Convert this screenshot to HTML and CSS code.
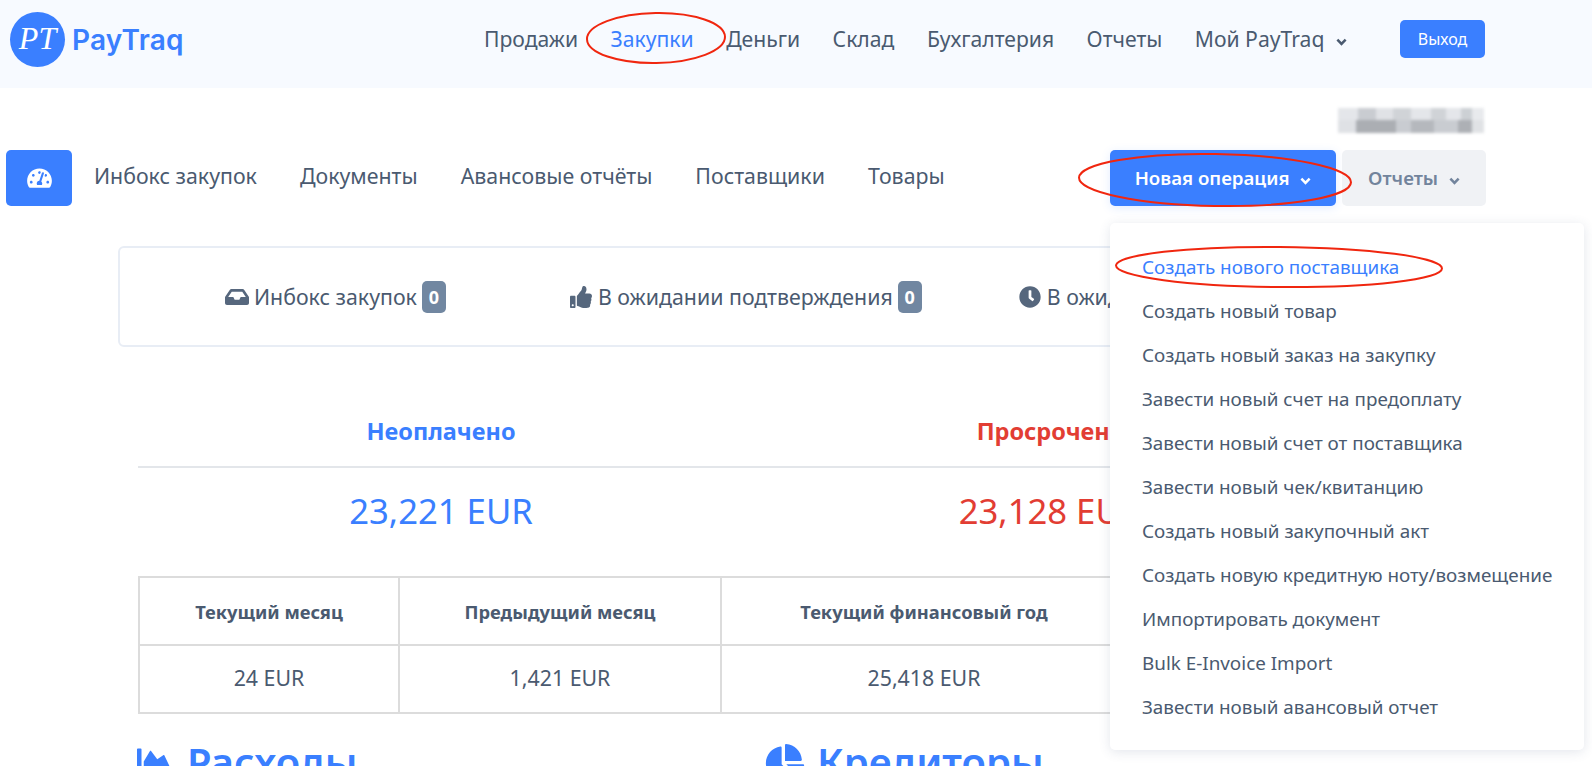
FILE: index.html
```html
<!DOCTYPE html>
<html lang="ru">
<head>
    <meta charset="UTF-8">
    <meta name="viewport" content="width=device-width, initial-scale=1.0">
    <title>PayTraq</title>
    <link rel="stylesheet" href="styles.css">
</head>
<body>
    <header class="topbar">
        <a class="logo">
            <span class="logo-mark">PT</span>
            <span class="logo-name">PayTraq</span>
        </a>
        <nav class="topnav">
            <a>Продажи</a>
            <a class="active">Закупки</a>
            <a>Деньги</a>
            <a>Склад</a>
            <a>Бухгалтерия</a>
            <a>Отчеты</a>
            <a>Мой PayTraq <svg class="chevron" viewBox="0 0 12 8"><path d="M1.5 1.5 6 6l4.500-4.500"/></svg></a>
        </nav>
        <a class="btn-logout">Выход</a>
    </header>

    <div class="account-blur">
        <div class="blur-row-one"></div>
        <div class="blur-row-two"></div>
    </div>

    <div class="subnav">
        <a class="home-btn">
            <svg class="icon-home" viewBox="0 0 576 512"><path d="M288 32C128.94 32 0 160.94 0 320c0 52.8 14.25 102.26 39.06 144.8 5.61 9.62 16.3 15.2 27.44 15.2h443c11.14 0 21.83-5.58 27.44-15.2C561.75 422.26 576 372.8 576 320c0-159.06-128.94-288-288-288zm0 64c14.71 0 26.58 10.13 30.32 23.65-1.11 2.26-2.64 4.23-3.45 6.67l-9.22 27.67c-5.13 3.49-10.97 6.01-17.64 6.01-17.67 0-32-14.33-32-32S270.33 96 288 96zM96 384c-17.67 0-32-14.33-32-32s14.33-32 32-32 32 14.33 32 32-14.33 32-32 32zm48-160c-17.67 0-32-14.33-32-32s14.33-32 32-32 32 14.33 32 32-14.33 32-32 32zm246.77-72.41l-61.33 184C343.13 347.33 352 364.54 352 384c0 11.72-3.38 22.55-8.88 32H232.88c-5.5-9.45-8.88-20.28-8.88-32 0-33.94 26.5-61.43 59.9-63.59l61.34-184.01c4.17-12.56 17.73-19.45 30.36-15.17 12.57 4.19 19.35 17.79 15.17 30.36zm14.66 57.2l15.52-46.55c3.47-1.29 7.13-2.23 11.05-2.23 17.67 0 32 14.33 32 32s-14.33 32-32 32c-11.38-.01-20.89-6.28-26.57-15.22zM480 384c-17.67 0-32-14.33-32-32s14.33-32 32-32 32 14.33 32 32-14.33 32-32 32z"/></svg>
        </a>
        <a class="subnav-link">Инбокс закупок</a>
        <a class="subnav-link">Документы</a>
        <a class="subnav-link">Авансовые отчёты</a>
        <a class="subnav-link">Поставщики</a>
        <a class="subnav-link">Товары</a>
        <div class="subnav-actions">
            <a class="btn-primary">Новая операция <svg class="chevron" viewBox="0 0 12 8"><path d="M1.5 1.5 6 6l4.500-4.500"/></svg></a>
            <a class="btn-light">Отчеты <svg class="chevron" viewBox="0 0 12 8"><path d="M1.5 1.5 6 6l4.500-4.500"/></svg></a>
        </div>
    </div>

    <main class="content">
        <div class="status-box">
            <div class="status-item">
                <svg class="icon-status" viewBox="0 0 576 512"><path d="M567.938 243.908L462.25 85.374A48.003 48.003 0 0 0 422.311 64H153.689a48 48 0 0 0-39.938 21.374L8.062 243.908A47.994 47.994 0 0 0 0 270.533V400c0 26.51 21.49 48 48 48h480c26.51 0 48-21.49 48-48V270.533a47.994 47.994 0 0 0-8.062-26.625zM162.252 128h251.497l85.333 128H376l-32 64H232l-32-64H76.918l85.334-128z"/></svg>
                Инбокс закупок <span class="badge">0</span>
            </div>
            <div class="status-item">
                <svg class="icon-status" viewBox="0 0 512 512"><path d="M104 224H24c-13.255 0-24 10.745-24 24v240c0 13.255 10.745 24 24 24h80c13.255 0 24-10.745 24-24V248c0-13.255-10.745-24-24-24zM64 472c-13.255 0-24-10.745-24-24s10.745-24 24-24 24 10.745 24 24-10.745 24-24 24zM384 81.452c0 42.416-25.97 66.208-33.277 94.548h101.723c33.397 0 59.397 27.746 59.553 58.098.084 17.938-7.546 37.249-19.439 49.197l-.11.11c9.836 23.337 8.237 56.037-9.308 79.469 8.681 25.895-.069 57.704-16.382 74.757 4.298 17.598 2.244 32.575-6.148 44.632C440.202 511.587 389.616 512 346.839 512l-2.845-.001c-48.287-.017-87.806-17.598-119.56-31.725-15.957-7.099-36.821-15.887-52.651-16.178-6.54-.12-11.783-5.457-11.783-11.998v-213.77c0-3.2 1.282-6.271 3.558-8.521 39.614-39.144 56.648-80.587 89.117-113.111 14.804-14.832 20.188-37.236 25.393-58.902C282.515 39.293 291.817 0 312 0c24 0 72 8 72 81.452z"/></svg>
                В ожидании подтверждения <span class="badge">0</span>
            </div>
            <div class="status-item">
                <svg class="icon-status" viewBox="0 0 512 512"><path d="M256,8C119,8,8,119,8,256S119,504,256,504,504,393,504,256,393,8,256,8Zm92.49,313h0l-20,25a16,16,0,0,1-22.49,2.5h0l-67-49.72a40,40,0,0,1-15-31.23V112a16,16,0,0,1,16-16h32a16,16,0,0,1,16,16V256l58,42.5A16,16,0,0,1,348.49,321Z"/></svg>
                В ожидании оплаты <span class="badge">0</span>
            </div>
        </div>

        <div class="totals">
            <div class="total-col">
                <h3 class="total-title">Неоплачено</h3>
                <div class="total-value">23,221 EUR</div>
            </div>
            <div class="total-col overdue">
                <h3 class="total-title">Просрочено</h3>
                <div class="total-value">23,128 EUR</div>
            </div>
        </div>

        <table class="period-table">
            <tr>
                <th class="col-month">Текущий месяц</th>
                <th class="col-prev">Предыдущий месяц</th>
                <th class="col-year">Текущий финансовый год</th>
                <th>Предыдущий год</th>
            </tr>
            <tr>
                <td>24 EUR</td>
                <td>1,421 EUR</td>
                <td>25,418 EUR</td>
                <td>0 EUR</td>
            </tr>
        </table>

        <div class="charts-head">
            <h2 class="chart-title chart-left">
                <svg class="icon-chart" viewBox="0 0 512 512"><path d="M500 384c6.6 0 12 5.4 12 12v40c0 6.6-5.4 12-12 12H12c-6.6 0-12-5.4-12-12V76c0-6.600 5.400-12 12-12h40c6.600 0 12 5.400 12 12v308h436zM372.700 159.500L288 216l-85.300-113.700c-5.100-6.800-15.500-6.300-19.900 1L96 248v104h384l-89.900-187.800c-3.200-6.500-11.400-8.700-17.400-4.700z"/></svg>
                Расходы
            </h2>
            <h2 class="chart-title">
                <svg class="icon-chart" viewBox="0 0 544 512"><path d="M527.79 288H290.5l158.03 158.03c6.04 6.04 15.98 6.53 22.19.68 38.7-36.46 65.32-85.61 73.13-140.86 1.34-9.46-6.51-17.85-16.06-17.85zm-15.83-64.8C503.72 103.74 408.26 8.28 288.8.04 279.68-.59 272 7.1 272 16.24V240h223.77c9.14 0 16.82-7.68 16.19-16.8zM224 288V50.71c0-9.55-8.39-17.4-17.84-16.06C86.99 51.49-4.1 155.6.14 280.37 4.5 408.51 114.83 513.59 243.03 511.98c50.4-.63 96.97-16.87 135.26-44.03 7.9-5.6 8.42-17.23 1.57-24.08L224 288z"/></svg>
                Кредиторы
            </h2>
        </div>
    </main>

    <div class="dropdown">
        <a class="active">Создать нового поставщика</a>
        <a>Создать новый товар</a>
        <a>Создать новый заказ на закупку</a>
        <a>Завести новый счет на предоплату</a>
        <a>Завести новый счет от поставщика</a>
        <a>Завести новый чек/квитанцию</a>
        <a>Создать новый закупочный акт</a>
        <a>Создать новую кредитную ноту/возмещение</a>
        <a>Импортировать документ</a>
        <a>Bulk E-Invoice Import</a>
        <a>Завести новый авансовый отчет</a>
    </div>

    <!-- red marks drawn over the screenshot -->
    <svg class="marks" viewBox="0 0 1592 766">
        <ellipse cx="656" cy="38" rx="69" ry="25" transform="rotate(-1 656 38)"/>
        <ellipse cx="1215" cy="180" rx="136" ry="26" transform="rotate(1 1215 180)"/>
        <ellipse cx="1279" cy="267" rx="163" ry="20" transform="rotate(0.5 1279 267)"/>
    </svg>
</body>
</html>
```

FILE: styles.css
```css
html, body {
    margin: 0;
    height: 766px;
    overflow: hidden;
}
body {
    position: relative;
    font-family: "Noto Sans", "Open Sans", sans-serif;
    color: #4a5a70;
    background: #fff;
}
a {
    color: inherit;
    text-decoration: none;
}

.chevron {
    width: 11px;
    height: 8px;
    margin-left: 6px;
    fill: none;
    stroke: currentColor;
    stroke-width: 2.800;
}

/* top bar */
.topbar {
    display: flex;
    align-items: flex-start;
    height: 88px;
    background: #f7faff;
}
.logo {
    display: flex;
    align-items: center;
    margin: 12px 0 0 10px;
    width: 460px;
}
.logo-mark {
    width: 55px;
    height: 55px;
    line-height: 53px;
    border-radius: 50%;
    background: #3a7fff;
    color: #fff;
    font-family: "Liberation Serif", serif;
    font-style: italic;
    font-size: 32px;
    text-align: center;
}
.logo-name {
    margin-left: 7px;
    color: #3a7fff;
    font-family: "Inter", sans-serif;
    font-weight: 600;
    font-size: 28px;
    letter-spacing: 0.2px;
}
.topnav {
    display: flex;
    gap: 32.500px;
    margin: 24px 0 0 14px;
    font-size: 21.150px;
    line-height: 30px;
    white-space: nowrap;
}
.topnav .active {
    color: #3a7fff;
}
.topnav .chevron {
    margin-left: 6px;
    vertical-align: 1px;
}
.btn-logout {
    margin: 20px 107px 0 auto;
    width: 85px;
    height: 38px;
    line-height: 38px;
    border-radius: 5px;
    background: #3a7fff;
    color: #fff;
    font-size: 16px;
    text-align: center;
}

.account-blur {
    width: 146px;
    margin: 20px 0 0 1338px;
    height: 25px;
    filter: blur(1.500px);
}
.blur-row-one {
    height: 12px;
    background: linear-gradient(90deg, #e4e6ea 0 14%, #c9ccd1 14% 26%, #e0e2e6 26% 38%, #d0d3d7 38% 50%, #e4e6ea 50% 64%, #d0d3d7 64% 74%, #e4e6ea 74% 84%, #ccd0d4 84% 92%, #e8eaed 92%);
}
.blur-row-two {
    height: 13px;
    background: linear-gradient(90deg, #dfe1e5 0 12%, #abaeb3 12% 40%, #c9ccd1 40% 50%, #b5b8bd 50% 66%, #c9ccd1 66% 82%, #adb0b5 82% 92%, #e0e2e5 92%);
}

/* second row */
.subnav {
    display: flex;
    align-items: center;
    margin-top: 17px;
    padding-left: 6px;
    font-size: 21.330px;
}
.home-btn {
    display: flex;
    align-items: center;
    justify-content: center;
    width: 66px;
    height: 56px;
    border-radius: 5px;
    background: #3a7fff;
}
.icon-home {
    width: 25px;
    height: 22px;
    fill: #fff;
}
.subnav-link {
    margin: 0 21px 5px 22px;
}
.subnav-actions {
    display: flex;
    gap: 6px;
    margin-left: auto;
    margin-right: 106px;
    font-size: 18.670px;
    font-weight: 600;
}
.btn-primary, .btn-light {
    display: block;
    height: 56px;
    line-height: 56px;
    border-radius: 5px;
    text-align: center;
}
.btn-primary {
    width: 226px;
    background: #3a7fff;
    color: #fff;
    box-shadow: 0 2px 10px rgba(58,127,255,0.15);
}
.btn-light {
    width: 144px;
    background: #f0f2f5;
    color: #72849c;
}

/* main content */
.content {
    padding: 40px 0 0 118px;
    width: 1360px;
}
.status-box {
    display: flex;
    height: 97px;
    align-items: center;
    padding-left: 30px;
    border: 2px solid #e8edf5;
    border-radius: 6px;
    font-size: 21.330px;
}
.status-item {
    display: flex;
    align-items: center;
    white-space: nowrap;
}
.status-item:nth-child(1) {
    margin-left: 75px;
}
.status-item:nth-child(2) {
    margin-left: 123px;
}
.status-item:nth-child(3) {
    margin-left: 96px;
}
.icon-status {
    width: 24px;
    height: 22px;
    margin-right: 5px;
    fill: #56677d;
}
.badge {
    display: inline-block;
    width: 24px;
    height: 32px;
    line-height: 32px;
    margin-left: 5px;
    border-radius: 5px;
    background: #7187a1;
    color: #fff;
    font-size: 18px;
    font-weight: 700;
    text-align: center;
}

.totals {
    display: flex;
    margin: 63px 0 0 20px;
}
.total-col {
    flex: 0 0 613px;
    text-align: center;
    color: #3a7fff;
}
.total-col:first-child {
    flex-basis: 606px;
}
.total-col.overdue {
    color: #e23d33;
}
.total-title {
    margin: 0;
    height: 56px;
    line-height: 42px;
    border-bottom: 2px solid #e3e6ea;
    font-size: 23.500px;
    font-weight: 700;
}
.total-value {
    margin-top: 16px;
    line-height: 54px;
    font-size: 34.670px;
}

.period-table {
    width: 1210px;
    margin: 38px 0 0 20px;
    border-collapse: collapse;
    table-layout: fixed;
    border: 2px solid #dcdcdc;
}
.period-table th, .period-table td {
    height: 66px;
    padding: 0;
    border: 2px solid #dcdcdc;
    text-align: center;
    font-size: 21.330px;
}
.period-table td {
    padding-bottom: 3px;
    height: 63px;
}
.period-table th {
    font-size: 18.330px;
    font-weight: 700;
}
.col-month {
    width: 258px;
}
.col-prev {
    width: 320px;
}
.col-year {
    width: 404px;
}

.charts-head {
    display: flex;
    margin: 22px 0 0 17px;
}
.chart-title {
    display: flex;
    align-items: center;
    margin: 0;
    color: #3a7fff;
    font-size: 40px;
    font-weight: 600;
    line-height: 52px;
    white-space: nowrap;
}
.chart-left {
    width: 630px;
}
.icon-chart {
    width: 40px;
    height: 36px;
    margin-right: 12px;
    fill: #3a7fff;
}

/* open dropdown */
.dropdown {
    position: absolute;
    top: 223px;
    left: 1110px;
    width: 474px;
    height: 527px;
    padding-top: 22px;
    box-sizing: border-box;
    border-radius: 5px;
    background: #fff;
    box-shadow: 0 2px 12px rgba(60,80,120,0.14);
    font-size: 18.850px;
}
.dropdown a {
    display: block;
    padding-left: 32px;
    height: 44px;
    line-height: 44px;
    white-space: nowrap;
}
.dropdown .active {
    color: #3a7fff;
}

.marks {
    position: absolute;
    top: 0;
    left: 0;
    width: 1592px;
    height: 766px;
    pointer-events: none;
    fill: none;
    stroke: #f0260f;
    stroke-width: 2;
}
```
